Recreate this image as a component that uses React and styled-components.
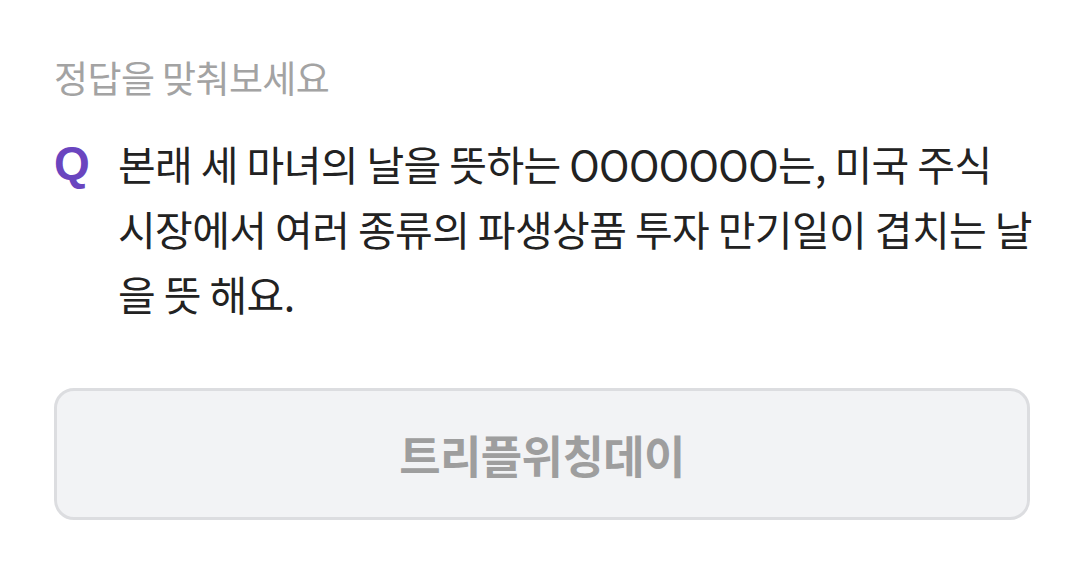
import React from "react";
import styled, { createGlobalStyle } from "styled-components";

const GlobalStyle = createGlobalStyle`
  html, body {
    margin: 0;
    padding: 0;
    background: #ffffff;
  }
  body {
    font-family: "Noto Sans CJK KR", "Noto Sans", sans-serif;
  }
`;

const Page = styled.div`
  width: 1080px;
  height: 562px;
  box-sizing: border-box;
  padding: 52px 50px 0 54px;
  display: flex;
  flex-direction: column;
`;

const Prompt = styled.div`
  font-size: 37px;
  line-height: 50px;
  color: #a3a3a3;
  letter-spacing: -0.6px;
`;

const QuestionRow = styled.div`
  display: flex;
  align-items: flex-start;
  margin-top: 29px;
  margin-right: -30px;
`;

const QMark = styled.div`
  width: 64px;
  flex-shrink: 0;
  font-family: "Liberation Sans", Arial, sans-serif;
  font-weight: 700;
  font-size: 46px;
  line-height: 65px;
  color: #6a45bf;
`;

const QuestionText = styled.p`
  margin: 0;
  font-size: 41px;
  line-height: 65px;
  color: #222222;
  letter-spacing: -0.6px;
  white-space: nowrap;
`;

const AnswerBox = styled.div`
  margin-top: 62px;
  height: 132px;
  box-sizing: border-box;
  border: 3px solid #dcdde0;
  border-radius: 20px;
  background: #f2f3f5;
  display: flex;
  align-items: center;
  justify-content: center;
`;

const AnswerText = styled.span`
  font-size: 45px;
  font-weight: 700;
  color: #9e9e9e;
  letter-spacing: -0.6px;
`;

export default function App() {
  return (
    <>
      <GlobalStyle />
      <Page>
        <Prompt>정답을 맞춰보세요</Prompt>
        <QuestionRow>
          <QMark>Q</QMark>
          <QuestionText>
            본래 세 마녀의 날을 뜻하는 OOOOOOO는, 미국 주식
            <br />
            시장에서 여러 종류의 파생상품 투자 만기일이 겹치는 날
            <br />을 뜻 해요.
          </QuestionText>
        </QuestionRow>
        <AnswerBox>
          <AnswerText>트리플위칭데이</AnswerText>
        </AnswerBox>
      </Page>
    </>
  );
}
